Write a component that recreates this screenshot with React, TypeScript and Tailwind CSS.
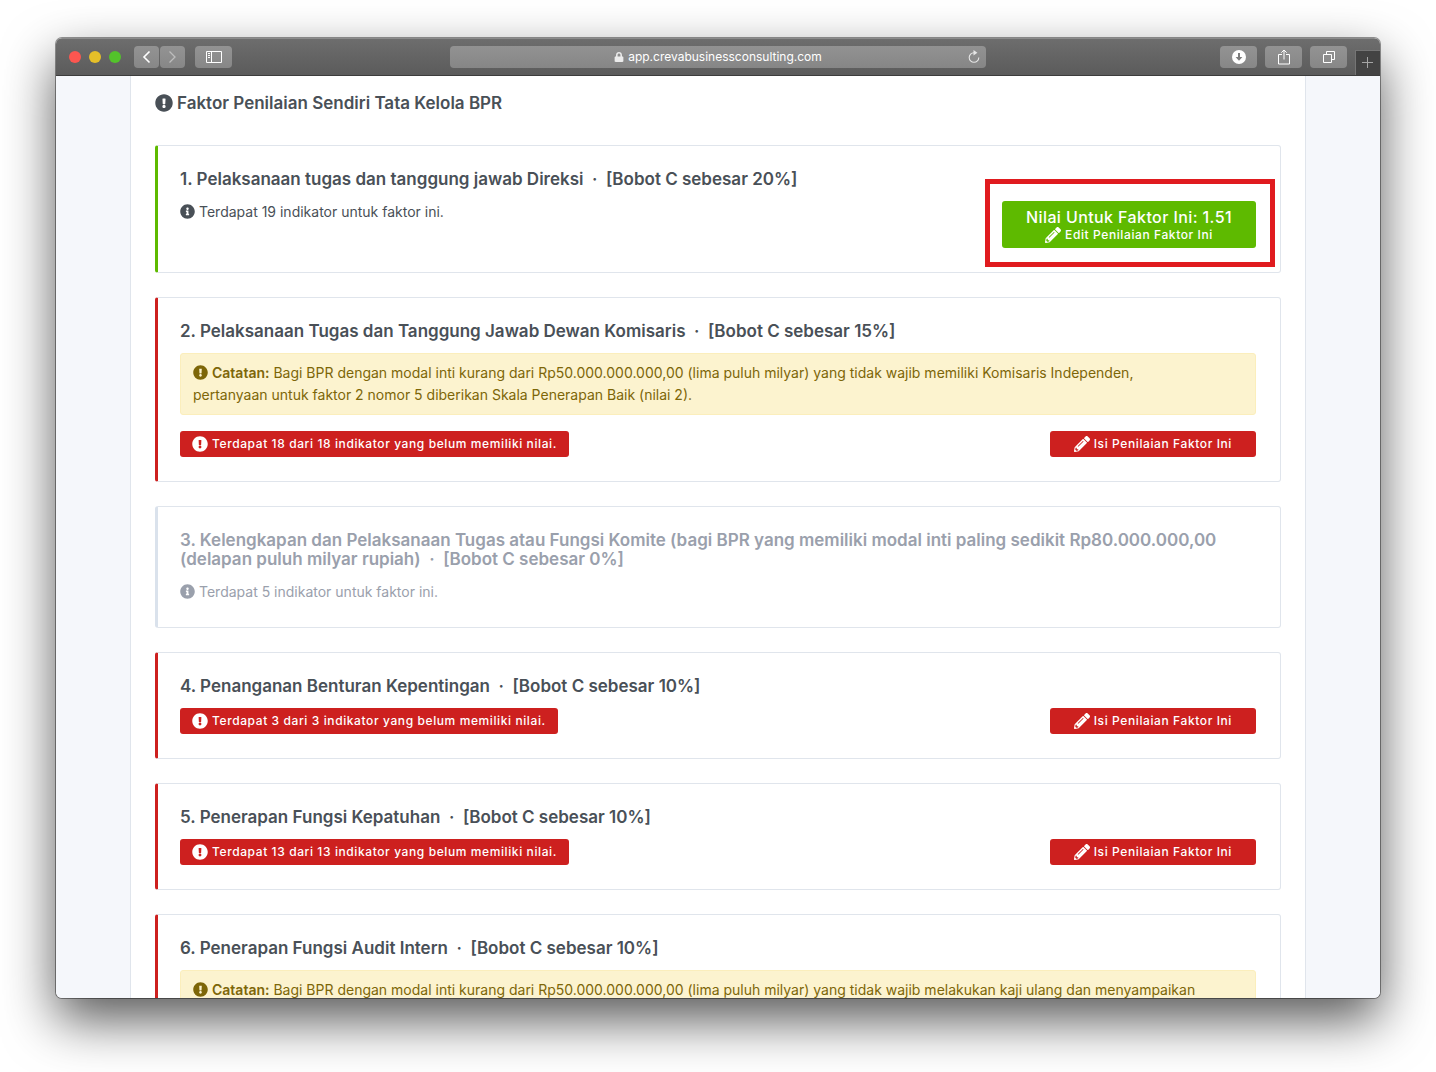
import React from 'react';
import { FaExclamationCircle, FaInfoCircle, FaLock, FaPencilAlt } from 'react-icons/fa';

type Status = 'done' | 'pending' | 'disabled';

interface Factor {
  no: number;
  title: string;
  weight: number;
  status: Status;
  indicators?: number;
  score?: string;
  note?: string[];
}

const factors: Factor[] = [
  { no: 1, title: 'Pelaksanaan tugas dan tanggung jawab Direksi', weight: 20, status: 'done', indicators: 19, score: '1.51' },
  {
    no: 2,
    title: 'Pelaksanaan Tugas dan Tanggung Jawab Dewan Komisaris',
    weight: 15,
    status: 'pending',
    indicators: 18,
    note: [
      'Bagi BPR dengan modal inti kurang dari Rp50.000.000.000,00 (lima puluh milyar) yang tidak wajib memiliki Komisaris Independen,',
      'pertanyaan untuk faktor 2 nomor 5 diberikan Skala Penerapan Baik (nilai 2).',
    ],
  },
  {
    no: 3,
    title: 'Kelengkapan dan Pelaksanaan Tugas atau Fungsi Komite (bagi BPR yang memiliki modal inti paling sedikit Rp80.000.000,00 (delapan puluh milyar rupiah)',
    weight: 0,
    status: 'disabled',
    indicators: 5,
  },
  { no: 4, title: 'Penanganan Benturan Kepentingan', weight: 10, status: 'pending', indicators: 3 },
  { no: 5, title: 'Penerapan Fungsi Kepatuhan', weight: 10, status: 'pending', indicators: 13 },
  {
    no: 6,
    title: 'Penerapan Fungsi Audit Intern',
    weight: 10,
    status: 'pending',
    note: ['Bagi BPR dengan modal inti kurang dari Rp50.000.000.000,00 (lima puluh milyar) yang tidak wajib melakukan kaji ulang dan menyampaikan'],
  },
];

const accents: Record<Status, string> = {
  done: 'border-l-[#5eba00] text-[#495057]',
  pending: 'border-l-[#cd201f] text-[#495057]',
  disabled: 'border-l-[#dae2ec] text-[#9aa0ac]',
};

const toolButton = 'flex h-[22px] items-center justify-center rounded bg-gradient-to-b from-[#939393] to-[#878787] text-white';

const Toolbar: React.FC = () => (
  <header className="flex h-[38px] shrink-0 items-center border-t border-b border-t-[#8b8b8b] border-b-[#3c3c3c] bg-gradient-to-b from-[#6d6d6d] to-[#5b5b5b]">
    <div className="flex flex-1 items-center">
      <div className="ml-[13px] flex gap-2">
        <span className="size-3 rounded-full bg-[#fc5650]" />
        <span className="size-3 rounded-full bg-[#e5bf29]" />
        <span className="size-3 rounded-full bg-[#53c22b]" />
      </div>
      <div className="ml-[13px] flex gap-px">
        <button aria-label="Back" className={`${toolButton} w-[25px]`}>
          <svg width="9" height="14" viewBox="0 0 9 14" fill="none" stroke="currentColor" strokeWidth="1.6">
            <path d="M7.500 1.500 2 7l5.500 5.500" />
          </svg>
        </button>
        <button aria-label="Forward" className={`${toolButton} w-[25px]`}>
          <svg width="9" height="14" viewBox="0 0 9 14" fill="none" stroke="#bdbdbd" strokeWidth="1.3">
            <path d="M1.500 1.500 7 7l-5.500 5.500" />
          </svg>
        </button>
      </div>
      <button aria-label="Sidebar" className={`${toolButton} ml-[10px] w-[37px]`}>
        <svg width="16" height="12" viewBox="0 0 16 12" fill="none" stroke="currentColor">
          <path d="M.5.5h15v11H.5zM5.500.5v11M2 2.500h2M2 4.500h2M2 6.500h2" />
        </svg>
      </button>
    </div>

    <div className="flex h-[22px] w-[40.5%] items-center rounded bg-gradient-to-b from-[#929292] to-[#868686] px-[6px] text-white">
      <span className="flex flex-1 items-center justify-center gap-1 pl-3 text-xs">
        <FaLock className="size-[10px] text-[#ececec]" />
        app.crevabusinessconsulting.com
      </span>
      <button aria-label="Reload">
        <svg width="12" height="14" viewBox="0 0 12 14" fill="none" stroke="#e6e6e6" strokeWidth="1.1">
          <path d="M6 2.700a4.800 4.800 0 1 0 4.800 4.800" />
          <path d="M5.500 0 9.400 2.700 5.500 5.400z" fill="#e6e6e6" stroke="none" />
        </svg>
      </button>
    </div>

    <div className="flex flex-1 items-center justify-end gap-2 self-stretch">
      <button aria-label="Downloads" className={`${toolButton} w-[37px]`}>
        <svg width="14" height="14" viewBox="0 0 14 14">
          <circle cx="7" cy="7" r="7" fill="#fff" />
          <path d="M7 3v5" fill="none" stroke="#7d7d7d" strokeWidth="2" />
          <path d="M3.600 7h6.800L7 10.800z" fill="#7d7d7d" />
        </svg>
      </button>
      <button aria-label="Share" className={`${toolButton} w-[37px]`}>
        <svg width="12" height="16" viewBox="0 0 12 16" fill="none" stroke="currentColor">
          <path d="M4 5.500H.5v9.500h11V5.500H8M6 10.500V1M3.300 3.700 6 1l2.700 2.700" />
        </svg>
      </button>
      <button aria-label="Show tabs" className={`${toolButton} w-[37px]`}>
        <svg width="14" height="14" viewBox="0 0 14 14" fill="none" stroke="currentColor">
          <path d="M1.500 4.500h8v8h-8zM4.500 4.500v-3h8v8h-3" />
        </svg>
      </button>
      <button aria-label="New tab" className="flex h-[25px] w-[25px] items-center justify-center self-end border-t border-l border-[#757575] bg-[#434343]">
        <svg width="12" height="12" viewBox="0 0 12 12" stroke="#a5a5a5">
          <path d="M5.500 0v11M0 5.500h11" />
        </svg>
      </button>
    </div>
  </header>
);

const FactorCard: React.FC<{ factor: Factor }> = ({ factor }) => {
  const { no, title, weight, status, indicators, score, note } = factor;

  return (
    <section className={`rounded-[3px] border border-l-[3px] border-[#e0e5ec] py-6 pr-6 pl-[22px] ${accents[status]}`}>
      <h2 className="text-[17px] leading-[19px] font-semibold">
        {`${no}. ${title} \u00a0·\u00a0 [Bobot C sebesar ${weight}%]`}
      </h2>

      {note && (
        <div className="mt-3 mb-4 rounded-[3px] border border-[#fbeebc] bg-[#fcf3cf] px-3 py-2 text-sm leading-[22px] text-[#7d6608]">
          <FaExclamationCircle className="mr-1 inline size-[15px] align-[-2px]" />
          <strong className="font-semibold">Catatan:</strong>{' '}
          {note.map((line, i) => (
            <React.Fragment key={line}>
              {i > 0 && <br />}
              {line}
            </React.Fragment>
          ))}
        </div>
      )}

      {indicators && (
        <div className="mt-3 flex items-start justify-between">
          {status === 'pending' ? (
            <span className="flex h-[26px] items-center gap-1 rounded-[3px] bg-[#cd201f] px-3 text-xs font-medium tracking-wider text-white">
              <FaExclamationCircle className="size-4" />
              {`Terdapat ${indicators} dari ${indicators} indikator yang belum memiliki nilai.`}
            </span>
          ) : (
            <p className="text-sm leading-[22px]">
              <FaInfoCircle className="mr-1 inline size-[15px] align-[-2px]" />
              {`Terdapat ${indicators} indikator untuk faktor ini.`}
            </p>
          )}

          {status === 'pending' && (
            <button className="flex h-[26px] items-center gap-1 rounded-[3px] bg-[#cd201f] px-6 text-xs font-medium tracking-wider text-white">
              <FaPencilAlt className="size-4" />
              Isi Penilaian Faktor Ini
            </button>
          )}

          {status === 'done' && (
            <div className="relative">
              <button className="flex h-[47px] flex-col items-center justify-center rounded-[3px] bg-[#5eba00] px-6 font-medium text-white">
                <span className="text-base leading-5 tracking-wide">{`Nilai Untuk Faktor Ini: ${score}`}</span>
                <span className="flex items-center gap-1 text-xs tracking-wider">
                  <FaPencilAlt className="size-4" />
                  Edit Penilaian Faktor Ini
                </span>
              </button>
              <div className="pointer-events-none absolute -top-[22px] -right-[19px] -bottom-[19px] -left-[17px] border-[5px] border-[#e01b1f]" />
            </div>
          )}
        </div>
      )}
    </section>
  );
};

const App: React.FC = () => (
  <div className="h-screen bg-white px-14 pt-[38px] pb-[74px] font-['Inter',sans-serif]">
    <div className="flex h-full flex-col overflow-hidden rounded-md shadow-[0_0_0_1px_rgba(0,0,0,0.4),0_22px_52px_rgba(0,0,0,0.66)]">
      <Toolbar />
      <div className="min-h-0 flex-1 overflow-hidden bg-[#f5f7fb] px-[74px]">
        <main className="border-x border-[#e0e5ec] bg-white px-6 pt-4">
          <h1 className="mb-[31px] flex items-center gap-1 text-[17px] leading-[22px] font-semibold text-[#495057]">
            <FaExclamationCircle className="size-[18px]" />
            Faktor Penilaian Sendiri Tata Kelola BPR
          </h1>
          <div className="flex flex-col gap-6">
            {factors.map((factor) => (
              <FactorCard key={factor.no} factor={factor} />
            ))}
          </div>
        </main>
      </div>
    </div>
  </div>
);

export default App;
